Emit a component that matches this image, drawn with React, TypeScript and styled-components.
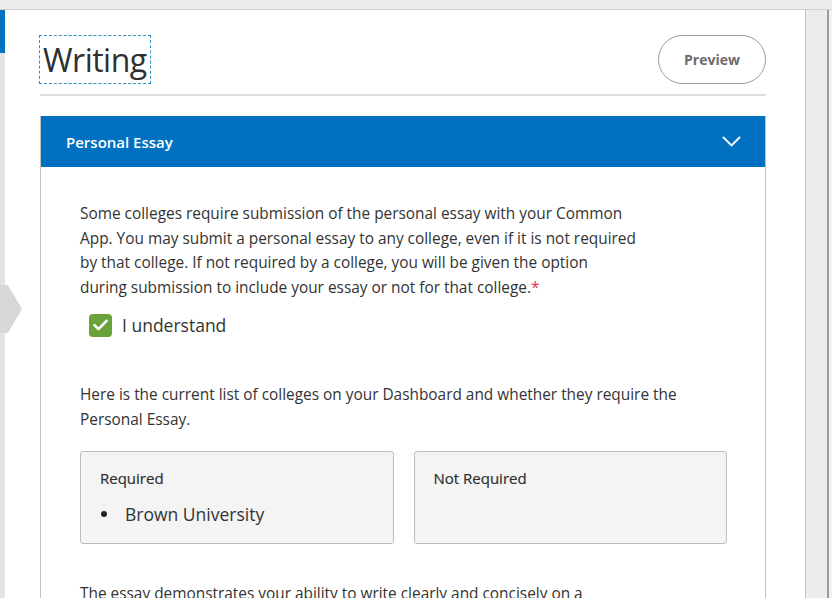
import { FunctionComponent } from 'react'
import styled, { createGlobalStyle } from 'styled-components'

const GlobalStyle = createGlobalStyle`
  html, body {
    margin: 0;
    padding: 0;
    background: #ececec;
  }
  body {
    font-family: 'Open Sans', 'Noto Sans', 'Liberation Sans', sans-serif;
    color: #333;
  }
  * { box-sizing: border-box; }
`

const Frame = styled.div`
  width: 832px;
  height: 598px;
  overflow: hidden;
  display: flex;
  flex-direction: column;
  position: relative;
`

const TopStrip = styled.div`
  height: 10px;
  flex-shrink: 0;
  background: #ececec;
  border-bottom: 1px solid #cfcfcf;
`

const Row = styled.div`
  flex: 1;
  display: flex;
  min-height: 0;
`

const LeftRail = styled.div`
  width: 5px;
  flex-shrink: 0;
  background: #e3e3e3;
  display: flex;
  flex-direction: column;
`

const RailActive = styled.div`
  height: 43px;
  background: #0070c0;
`

const StepArrow = styled.div`
  position: absolute;
  left: 0;
  top: 285px;
  width: 22px;
  height: 48px;
  background: #d7d7d7;
  clip-path: polygon(0 0, 36% 0, 100% 50%, 36% 100%, 0 100%);
`

const Card = styled.main`
  width: 801px;
  flex-shrink: 0;
  background: #fff;
  border-right: 1px solid #c4c4c4;
  box-shadow: 1px 0 1px rgba(0, 0, 0, 0.08);
  padding: 25px 39px 0 35px;
`

const Gutter = styled.div`
  width: 23px;
  flex-shrink: 0;
  background: #ececec;
  border-right: 2px solid #9c9c9c;
`

const EdgeStrip = styled.div`
  flex: 1;
  background: #f2f2f2;
`

const Header = styled.header`
  display: flex;
  align-items: center;
  justify-content: space-between;
  padding-bottom: 10px;
  border-bottom: 2px solid #dedede;
`

const Title = styled.h1`
  margin: 0;
  padding: 0 3px 0 3px;
  height: 47px;
  display: flex;
  align-items: center;
  font-size: 32px;
  font-weight: 400;
  letter-spacing: -0.5px;
  color: #2f2f2f;
  outline: 1px dashed #2f8fc8;
`

const PreviewButton = styled.button`
  width: 108px;
  height: 49px;
  border-radius: 25px;
  border: 1px solid #9a9a9a;
  background: #fff;
  color: #6b6b6b;
  font-family: inherit;
  font-size: 14px;
  font-weight: 700;
  cursor: pointer;
`

const Accordion = styled.section`
  margin-top: 20px;
  border: 1px solid #c2c2c2;
  border-top: none;
  border-bottom: none;
`

const AccordionHead = styled.div`
  height: 51px;
  background: #0070c0;
  display: flex;
  align-items: center;
  justify-content: space-between;
  padding: 0 24px 0 25px;
  color: #fff;
  font-size: 15px;
  font-weight: 600;
`

const AccordionBody = styled.div`
  padding: 35px 38px 0 39px;
`

const Para = styled.p<{ $width?: number }>`
  margin: 0;
  font-size: 15.4px;
  line-height: 24.6px;
  color: #333;
  max-width: ${(p) => (p.$width ? `${p.$width}px` : 'none')};
`

const Required = styled.span`
  color: #e0314b;
`

const CheckRow = styled.label`
  display: flex;
  align-items: center;
  gap: 10px;
  margin: 13px 0 46px 9px;
  font-size: 17.5px;
  color: #333;
`

const CheckBox = styled.span`
  width: 23px;
  height: 23px;
  border-radius: 4px;
  background: #6aa33b;
  display: flex;
  align-items: center;
  justify-content: center;
`

const BoxGrid = styled.div`
  display: grid;
  grid-template-columns: 1fr 1fr;
  gap: 20px;
  margin: 18px 0 38px;
`

const CollegeBox = styled.div`
  height: 93px;
  background: #f4f4f4;
  border: 1px solid #bcbcbc;
  border-radius: 3px;
  padding: 16px 19px;
`

const BoxTitle = styled.div`
  font-size: 15px;
  font-weight: 500;
  color: #2e2e2e;
  -webkit-text-stroke: 0.2px #2e2e2e;
`

const CollegeList = styled.ul`
  margin: 14px 0 0;
  padding: 0;
  list-style: none;
  font-size: 17.5px;
  color: #333;
`

const CollegeItem = styled.li`
  display: flex;
  align-items: center;
  gap: 18px;
  &::before {
    content: '';
    width: 6px;
    height: 6px;
    border-radius: 50%;
    background: #222;
    margin-left: 1px;
  }
`

const ChevronDown = () => (
  <svg width="19" height="11" viewBox="0 0 19 11" fill="none">
    <path d="M1 1l8.5 8.5L18 1" stroke="#fff" strokeWidth="1.8" />
  </svg>
)

const CheckMark = () => (
  <svg width="15" height="12" viewBox="0 0 15 12" fill="none">
    <path d="M1.5 6.2l4 4L13.5 1.8" stroke="#fff" strokeWidth="2.6" strokeLinecap="round" strokeLinejoin="round" />
  </svg>
)

const App: FunctionComponent = () => {
  return (
    <Frame>
      <GlobalStyle />
      <TopStrip />
      <Row>
        <LeftRail>
          <RailActive />
        </LeftRail>
        <Card>
          <Header>
            <Title>Writing</Title>
            <PreviewButton>Preview</PreviewButton>
          </Header>
          <Accordion>
            <AccordionHead>
              <span>Personal Essay</span>
              <ChevronDown />
            </AccordionHead>
            <AccordionBody>
              <Para>
                Some colleges require submission of the personal essay with your Common
                <br />
                App. You may submit a personal essay to any college, even if it is not required
                <br />
                by that college. If not required by a college, you will be given the option
                <br />
                during submission to include your essay or not for that college.<Required>*</Required>
              </Para>
              <CheckRow>
                <CheckBox>
                  <CheckMark />
                </CheckBox>
                I understand
              </CheckRow>
              <Para $width={625}>
                Here is the current list of colleges on your Dashboard and whether they require the
                Personal Essay.
              </Para>
              <BoxGrid>
                <CollegeBox>
                  <BoxTitle>Required</BoxTitle>
                  <CollegeList>
                    <CollegeItem>Brown University</CollegeItem>
                  </CollegeList>
                </CollegeBox>
                <CollegeBox>
                  <BoxTitle>Not Required</BoxTitle>
                </CollegeBox>
              </BoxGrid>
              <Para $width={545}>
                The essay demonstrates your ability to write clearly and concisely on a selected
                topic and helps you distinguish yourself in your own voice.
              </Para>
            </AccordionBody>
          </Accordion>
        </Card>
        <Gutter />
        <EdgeStrip />
      </Row>
      <StepArrow />
    </Frame>
  )
}

export default App
